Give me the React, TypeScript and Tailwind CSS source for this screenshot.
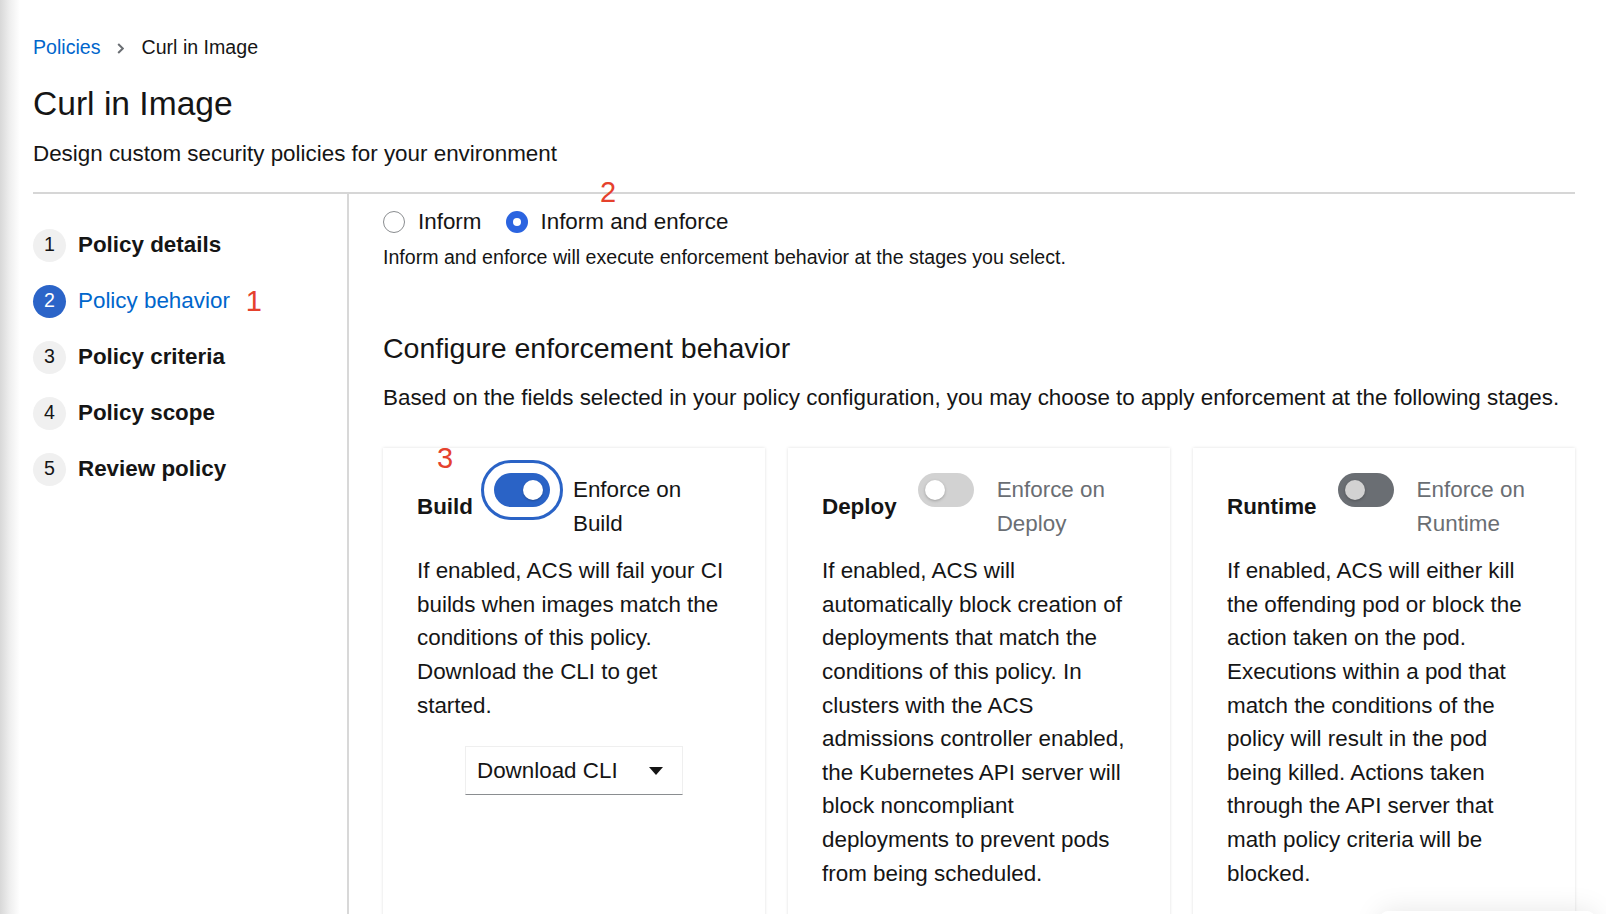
import React from "react";

type Kind = "on" | "light" | "dark";

function Switch({ kind }: { kind: Kind }) {
  if (kind === "on") {
    return (
      <span className="flex h-[33.6px] w-[56px] shrink-0 items-center justify-end rounded-full bg-[#2a63c6] px-[7px] outline-3 outline-offset-[10px] outline-[#2a63c6]">
        <span className="block h-[20px] w-[20px] rounded-full bg-white shadow-[0_1px_2px_rgba(0,0,0,0.25)]" />
      </span>
    );
  }
  if (kind === "light") {
    return (
      <span className="flex h-[33.6px] w-[56px] shrink-0 items-center justify-start rounded-full bg-[#d2d2d2] px-[7px]">
        <span className="block h-[20px] w-[20px] rounded-full bg-white shadow-[0_1px_3px_rgba(0,0,0,0.25)]" />
      </span>
    );
  }
  return (
    <span className="flex h-[33.6px] w-[56px] shrink-0 items-center justify-start rounded-full bg-[#6a6e73] px-[7px]">
      <span className="block h-[20px] w-[20px] rounded-full bg-[#d2d2d2] shadow-[0_1px_3px_rgba(0,0,0,0.25)]" />
    </span>
  );
}

function Card({
  title,
  kind,
  stage,
  lines,
  children,
}: {
  title: string;
  kind: Kind;
  stage: string;
  lines: string[];
  children?: React.ReactNode;
}) {
  const labelColor = kind === "on" ? "text-[#151515]" : "text-[#6a6e73]";
  return (
    <div className="min-h-[520px] bg-white px-[34px] pt-[25px] shadow-[0_0_3px_rgba(0,0,0,0.13)]">
      <div className="flex items-center">
        <span className="text-[22.4px] font-bold leading-[33.6px]">{title}</span>
        <div className="ml-[21px] flex items-start">
          <Switch kind={kind} />
          <span className={`ml-[23px] text-[22.4px] leading-[33.6px] ${labelColor}`}>
            Enforce on
            <br />
            {stage}
          </span>
        </div>
      </div>
      <div className="mt-[14px] text-[22.4px] leading-[33.6px]">
        {lines.map((l, i) => (
          <div key={i} className="whitespace-nowrap">
            {l}
          </div>
        ))}
      </div>
      {children}
    </div>
  );
}

const steps = [
  { n: 1, label: "Policy details" },
  { n: 2, label: "Policy behavior", active: true },
  { n: 3, label: "Policy criteria" },
  { n: 4, label: "Policy scope" },
  { n: 5, label: "Review policy" },
];

export default function App() {
  return (
    <div className="relative flex h-[914px] w-full overflow-hidden bg-white font-['Liberation_Sans',Arial,sans-serif] text-[#151515]">
      <div className="w-[20px] shrink-0 bg-linear-to-r from-[#d8d8d8] via-[#efefef] to-white" />
      <div className="flex min-w-0 flex-1 flex-col pl-[13px] pr-[31px]">
        {/* Breadcrumb */}
        <nav className="mt-[34px] flex h-[28px] shrink-0 items-center text-[19.6px]">
          <span className="text-[#0066cc]">Policies</span>
          <svg className="ml-[16px] mr-[18px]" width="7" height="11" viewBox="0 0 7 11">
            <path d="M1.2 1 L5.8 5.5 L1.2 10" fill="none" stroke="#6a6e73" strokeWidth="2" />
          </svg>
          <span>Curl in Image</span>
        </nav>

        <h1 className="mt-[22px] h-[40px] shrink-0 text-[33.6px] leading-[40px] font-normal">Curl in Image</h1>
        <p className="mt-[13px] h-[34px] shrink-0 text-[22.4px] leading-[34px]">
          Design custom security policies for your environment
        </p>

        <div className="mt-[21px] h-[2px] shrink-0 bg-[#d6d6d6]" />

        <div className="flex flex-1">
          {/* Wizard nav */}
          <div className="w-[314px] shrink-0 pt-[23px]">
            {steps.map((s) => (
              <div key={s.n} className="flex h-[56px] items-center">
                <span
                  className={`flex h-[33px] w-[33px] items-center justify-center rounded-full text-[19.6px] ${
                    s.active ? "bg-[#2b64c8] text-white" : "bg-[#f0f0f0] text-[#151515]"
                  }`}
                >
                  {s.n}
                </span>
                <span
                  className={`ml-[12px] text-[22.4px] ${
                    s.active ? "text-[#0066cc]" : "font-bold text-[#151515]"
                  }`}
                >
                  {s.label}
                </span>
                {s.active && (
                  <span className="ml-[16px] text-[29px] leading-none text-[#e5412d]">1</span>
                )}
              </div>
            ))}
          </div>
          <div className="w-[2px] shrink-0 bg-[#d8d8d8]" />

          {/* Content */}
          <div className="min-w-0 flex-1 pl-[34px] pt-[11px]">
            <div className="flex h-[34px] items-center text-[22.4px]">
              <span className="h-[22px] w-[22px] rounded-full border border-[#8a8d90] bg-white" />
              <span className="ml-[13px]">Inform</span>
              <span className="ml-[25px] flex h-[22px] w-[22px] items-center justify-center rounded-full bg-[#2b64e0]">
                <span className="h-[8px] w-[8px] rounded-full bg-white" />
              </span>
              <span className="ml-[12px]">Inform and enforce</span>
            </div>
            <p className="mt-[4px] h-[28px] text-[19.6px] leading-[28px]">
              Inform and enforce will execute enforcement behavior at the stages you select.
            </p>

            <h2 className="mt-[57px] h-[40px] text-[28.5px] leading-[40px] font-normal">
              Configure enforcement behavior
            </h2>
            <p className="mt-[13px] h-[34px] whitespace-nowrap text-[22.4px] leading-[34px]">
              Based on the fields selected in your policy configuration, you may choose to apply enforcement at the
              following stages.
            </p>

            <div className="mt-[33px] grid grid-cols-3 gap-[23px]">
              <Card
                title="Build"
                kind="on"
                stage="Build"
                lines={[
                  "If enabled, ACS will fail your CI",
                  "builds when images match the",
                  "conditions of this policy.",
                  "Download the CLI to get",
                  "started.",
                ]}
              >
                <div className="mt-[24px] flex justify-center">
                  <div className="flex h-[49px] w-[218px] items-center justify-between border border-[#efefef] border-b-[#8a8d90] pl-[11px] pr-[19px] text-[22.4px]">
                    <span>Download CLI</span>
                    <svg width="14" height="8" viewBox="0 0 14 8">
                      <path d="M0 0 H14 L7 8 Z" fill="#151515" />
                    </svg>
                  </div>
                </div>
              </Card>
              <Card
                title="Deploy"
                kind="light"
                stage="Deploy"
                lines={[
                  "If enabled, ACS will",
                  "automatically block creation of",
                  "deployments that match the",
                  "conditions of this policy. In",
                  "clusters with the ACS",
                  "admissions controller enabled,",
                  "the Kubernetes API server will",
                  "block noncompliant",
                  "deployments to prevent pods",
                  "from being scheduled.",
                ]}
              />
              <Card
                title="Runtime"
                kind="dark"
                stage="Runtime"
                lines={[
                  "If enabled, ACS will either kill",
                  "the offending pod or block the",
                  "action taken on the pod.",
                  "Executions within a pod that",
                  "match the conditions of the",
                  "policy will result in the pod",
                  "being killed. Actions taken",
                  "through the API server that",
                  "math policy criteria will be",
                  "blocked.",
                ]}
              />
            </div>
          </div>
        </div>
      </div>

      {/* Annotations */}
      <span className="absolute left-[600px] top-[178px] text-[29px] leading-none text-[#e5412d]">2</span>
      <span className="absolute left-[437px] top-[444px] text-[29px] leading-none text-[#e5412d]">3</span>

      {/* Floating element peeking at bottom-right */}
      <div className="absolute left-[1380px] top-[911px] h-[40px] w-[215px] rounded-[8px] bg-white shadow-[0_0_28px_rgba(0,0,0,0.10)]" />
    </div>
  );
}
